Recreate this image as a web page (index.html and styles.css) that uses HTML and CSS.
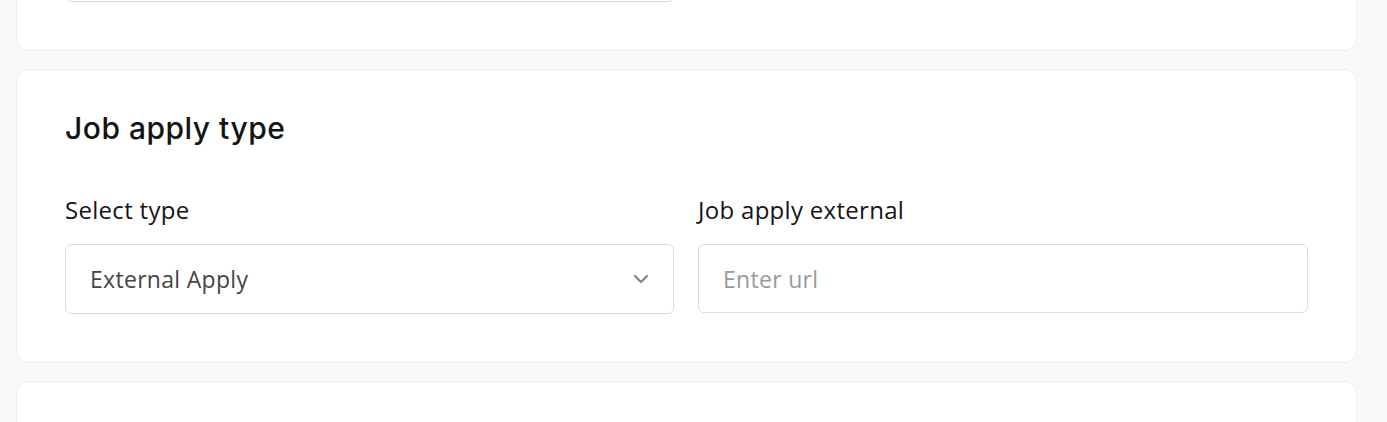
FILE: index.html
```html
<!DOCTYPE html>
<html lang="en">
<head>
<meta charset="utf-8">
<title>Job apply type</title>
<link rel="stylesheet" href="styles.css">
</head>
<body>
<div class="page">
  <section class="card card-top">
    <div class="field-row">
      <div class="field"><div class="input-box prev"></div></div>
    </div>
  </section>
  <section class="card">
    <h2 class="card-title">Job apply type</h2>
    <div class="field-row">
      <div class="field">
        <label class="label">Select type</label>
        <div class="input-box select">
          <span class="value">External Apply</span>
          <svg class="chevron" width="16" height="10" viewBox="0 0 16 10"><path d="M2 2 L8 8 L14 2" fill="none" stroke="#80868b" stroke-width="2.2" stroke-linecap="round" stroke-linejoin="round"/></svg>
        </div>
      </div>
      <div class="field">
        <label class="label">Job apply external</label>
        <div class="input-box text"><span class="placeholder">Enter url</span></div>
      </div>
    </div>
  </section>
  <section class="card card-bottom"></section>
</div>
</body>
</html>
```
FILE: styles.css
```css
html, body {
  margin: 0;
  padding: 0;
  background: #f9f9f9;
  height: 422px;
  overflow: hidden;
}
.page {
  display: flex;
  flex-direction: column;
  gap: 18px;
  padding: 0 30px 0 16px;
  margin-top: -116px;
  font-family: "Open Sans", "Lato", sans-serif;
}
.card {
  background: #fff;
  border: 1px solid #ececec;
  border-radius: 12px;
  padding: 48px;
}
.card-bottom { height: 100px; }
.card-title {
  margin: 0 0 60px;
  font-family: "Inter", sans-serif;
  font-weight: 500;
  font-size: 30px;
  line-height: 20px;
  color: #141414;
  letter-spacing: 0.5px;
}
.field-row {
  display: grid;
  grid-template-columns: 609px 1fr;
  gap: 24px;
}
.field { display: flex; flex-direction: column; }
.label {
  font-size: 24px;
  line-height: 24px;
  color: #151515;
  letter-spacing: 0.3px;
  margin-bottom: 22px;
}
.input-box {
  box-sizing: border-box;
  height: 69px;
  border: 1px solid #dcdcdc;
  border-radius: 6px;
  display: flex;
  align-items: center;
  padding: 0 24px;
  font-size: 23px;
  letter-spacing: 0.3px;
}
.select { justify-content: space-between; height: 70px; }
.value { color: #454545; }
.placeholder { color: #9a9a9a; }
.chevron { margin-right: 0; }
```
